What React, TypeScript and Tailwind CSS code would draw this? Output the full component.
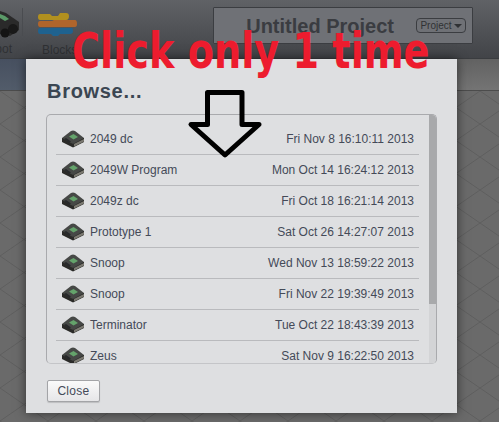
import React from 'react';

const programs = [
  { name: '2049 dc', date: 'Fri Nov 8 16:10:11 2013' },
  { name: '2049W Program', date: 'Mon Oct 14 16:24:12 2013' },
  { name: '2049z dc', date: 'Fri Oct 18 16:21:14 2013' },
  { name: 'Prototype 1', date: 'Sat Oct 26 14:27:07 2013' },
  { name: 'Snoop', date: 'Wed Nov 13 18:59:22 2013' },
  { name: 'Snoop', date: 'Fri Nov 22 19:39:49 2013' },
  { name: 'Terminator', date: 'Tue Oct 22 18:43:39 2013' },
  { name: 'Zeus', date: 'Sat Nov 9 16:22:50 2013' },
];

const BrickIcon: React.FC = () => (
  <svg width="24" height="19" viewBox="0 0 24 19" className="shrink-0">
    <path d="M1 9 L1 13 L12 18.5 L23 13 L23 9 Z" fill="#2a2a28" />
    <path d="M1 9 L10 2 Q12 0.8 14 2 L23 9 L13 14.5 Q12 15 11 14.5 Z" fill="#464846" />
    <path d="M13 15 L23 10 L23 12.5 L13 17.5 Z" fill="#7c7a72" />
    <path d="M8 7.5 L12.5 5 L17 8 L12.5 10.5 Z" fill="#64a36b" />
    <path d="M3 10 L5 9 L10 12.5 L8 13.5 Z" fill="#27292b" />
  </svg>
);

const RobotIcon: React.FC = () => (
  <svg width="24" height="38" viewBox="0 0 24 38" className="shrink-0">
    <path d="M0 11 L6 13 L19 22 L19 30 L10 36 L0 34 Z" fill="#2a2a2a" />
    <path d="M0 14 L5 16 L9 19 L5 21 L0 18 Z" fill="#5a9a68" />
    <circle cx="13" cy="29" r="5" fill="#191919" />
    <circle cx="5" cy="33" r="4.5" fill="#141414" />
    <path d="M22.5 8 L22.5 36" stroke="#4a4c50" strokeWidth="1" />
  </svg>
);

const BlocksIcon: React.FC = () => (
  <svg width="40" height="24" viewBox="0 0 40 24" className="shrink-0">
    <path d="M2 1 L12 1 L14 3 L20 3 L22 0 L28 0 Q31 0 31 3 Q31 7 28 7 L2 7 Q0 7 0 4 Q0 1 2 1 Z" fill="#b1901f" />
    <path d="M2 8 L14 8 L16 7 L20 7 L22 7 L37 7 Q39 7 39 11 Q39 14 37 14 L2 14 Q0 14 0 11 Q0 8 2 8 Z" fill="#b0652c" />
    <path d="M2 15 L34 15 Q35 15 35 18 Q35 21 32 21 L22 21 L20 23 L15 23 L13 21 L2 21 Q0 21 0 18 Q0 15 2 15 Z" fill="#1f628f" />
  </svg>
);

const FloorPattern: React.FC = () => (
  <svg className="absolute inset-0 h-full w-full" aria-hidden="true">
    <defs>
      <pattern id="floor" width="48" height="33" patternUnits="userSpaceOnUse">
        <rect width="48" height="33" fill="#6a6a6a" />
        <path d="M0 0 L48 33 M48 0 L0 33" stroke="#5e5e5e" strokeWidth="1" />
      </pattern>
    </defs>
    <rect width="100%" height="100%" fill="url(#floor)" />
  </svg>
);

const DownArrow: React.FC = () => (
  <svg width="78" height="74" viewBox="0 0 78 74">
    <path
      d="M20.5 36.5 L20.5 4.5 L55 4.5 L55 36.5 L72 36.5 L38 67 L4 36.5 Z"
      fill="none"
      stroke="#000"
      strokeWidth="5"
      strokeLinejoin="round"
    />
  </svg>
);

export default function App() {
  return (
    <div className="relative flex h-[422px] w-[499px] flex-col overflow-hidden bg-[#6a6a6a] font-['Liberation_Sans',Arial,sans-serif]">
      <div className="flex h-[59px] shrink-0 items-start border-b border-[#3a3c3f] bg-gradient-to-b from-[#606266] to-[#424448]">
        <div className="flex w-[24px] flex-col items-end overflow-hidden">
          <RobotIcon />
          <span className="mr-[12px] mt-[4px] whitespace-nowrap text-[12px] leading-[14px] text-[#2f3134]">Robot</span>
        </div>
        <div className="ml-[14px] flex w-[39px] flex-col items-start pt-[13px]">
          <BlocksIcon />
          <span className="ml-[4px] mt-[6px] text-[12px] leading-[14px] text-[#2f3134]">Blocks</span>
        </div>
        <div className="ml-[136px] mt-[7px] flex h-[37px] w-[260px] items-center justify-end rounded-[1px] border border-[#3b3d41] bg-[#6f7176] pr-[6px]">
          <span className="mr-[22px] text-[20px] font-bold leading-none text-[#3a3c41]">Untitled Project</span>
          <span className="flex h-[15px] w-[50px] items-center justify-center gap-[2px] rounded-[4px] border border-[#3b3d41] text-[10px] text-[#2f3134]">
            Project
            <span className="h-0 w-0 border-x-[4px] border-t-[4px] border-x-transparent border-t-[#2f3134]" />
          </span>
        </div>
      </div>

      <div className="flex h-[31px] shrink-0">
        <div className="w-[26px] bg-gradient-to-b from-[#475060] to-[#525c6a]" />
        <div className="flex-1 bg-gradient-to-b from-[#626262] to-[#747474]" />
      </div>

      <div className="relative flex-1 border-t border-[#4c4c4c]">
        <FloorPattern />
      </div>

      {/* dialog */}
      <div className="absolute left-[26px] top-[59px] flex h-[354px] w-[431px] flex-col bg-[#dedfe1] px-[20px] shadow-[0_0_10px_rgba(0,0,0,0.55)]">
        <h2 className="ml-[1px] mt-[20px] text-[20px] font-bold leading-[24px] tracking-[0.7px] text-[#3b4652]">Browse...</h2>
        <div className="mt-[11px] flex h-[250px] overflow-hidden rounded-[5px] border border-[#a9aaad] border-b-[#c4c5c8]">
          <ul className="min-w-0 flex-1 pl-[9px] pr-[10px] pt-[9px]">
            {programs.map((program, index) => (
              <li
                key={index}
                className="flex h-[31px] items-center border-b border-[#b9babd] pb-[1px] pr-[5px] text-[12px] text-[#444a58]"
              >
                <span className="mx-[5px]"><BrickIcon /></span>
                <span className="flex-1">{program.name}</span>
                <span>{program.date}</span>
              </li>
            ))}
          </ul>
          <div className="w-[7px] shrink-0 bg-[#d3d4d6]">
            <div className="h-[189px] bg-[#a8a9ab]" />
          </div>
        </div>
        <button className="ml-[1px] mt-[16px] h-[22px] w-[53px] rounded-[2px] border border-[#a3a4a7] bg-gradient-to-b from-[#fafafa] to-[#e6e6e8] text-[12px] tracking-[0.3px] text-[#444a58] shadow-[0_1px_1px_rgba(0,0,0,0.15)]">
          Close
        </button>
      </div>

      <div className="absolute left-[72px] top-[21px] origin-left scale-x-[0.85] whitespace-nowrap font-['DejaVu_Sans_Condensed','Liberation_Sans',sans-serif] text-[50px] font-bold leading-[60px] text-[#ed1c2e]">
        Click only 1 time
      </div>

      <div className="absolute left-[187px] top-[88px]">
        <DownArrow />
      </div>
    </div>
  );
}
